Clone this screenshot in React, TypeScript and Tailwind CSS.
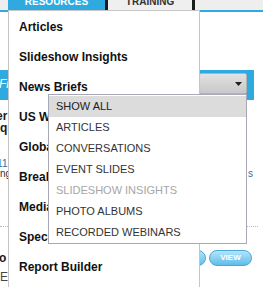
const menuItems = [
  'Articles',
  'Slideshow Insights',
  'News Briefs',
  'US Weekly Briefs',
  'Global Insights',
  'Breaking News',
  'Media Kits',
  'Special Reports',
  'Report Builder',
]

const options = [
  { label: 'Show All', active: true },
  { label: 'Articles' },
  { label: 'Conversations' },
  { label: 'Event Slides' },
  { label: 'Slideshow Insights', disabled: true },
  { label: 'Photo Albums' },
  { label: 'Recorded Webinars' },
]

export default function App() {
  return (
    <div className="relative h-[287px] w-[263px] overflow-hidden bg-white font-['Liberation_Sans',Arial,sans-serif]">
      {/* tabs */}
      <div className="flex h-[10px] bg-[#eeeeee] pl-[8px]">
        <div className="w-[97px] overflow-hidden bg-[#2eaae1] text-center text-[10px] font-bold leading-[10px] text-white">
          <div className="-mt-[3px]">RESOURCES</div>
        </div>
        <div className="w-[3px] bg-[#1c1c1c]" />
        <div className="w-[84px] overflow-hidden bg-[#efefef] text-center text-[10px] font-bold leading-[10px] text-[#333]">
          <div className="-mt-[3px]">TRAINING</div>
        </div>
        <div className="w-[3px] bg-[#1c1c1c]" />
      </div>
      <div className="h-[2px] bg-[#2eaae1]" />

      {/* filter band */}
      <div className="mt-[58px] flex h-[30px] w-[254px] bg-[#2eaae1]">
        <div className="w-[199px] overflow-hidden whitespace-nowrap pt-[7px] text-[12px] italic leading-[14px] text-white">
          <span className="-ml-[1px] inline-block">Filter by</span>
        </div>
        <div className="mt-[3px] flex h-[21px] w-[48px] items-center justify-end rounded-[2px] border border-[#b3b3b3] bg-gradient-to-b from-[#e2e2e2] to-[#c8c8c8] pr-[4px]">
          <svg width="7" height="4" viewBox="0 0 7 4">
            <path d="M0 0h7L3.5 4z" fill="#1e1e1e" />
          </svg>
        </div>
      </div>

      {/* page content peeking out */}
      <div className="whitespace-nowrap pt-[10px]">
        <p className="-ml-[4px] text-[12px] font-bold leading-[12px] text-[#1a1a1a]">er Report</p>
        <p className="text-[12px] font-bold leading-[12px] text-[#1a1a1a]">quarterly</p>
        <p className="mt-[25px] -ml-[14px] text-[10px] leading-[10px] text-[#2b6fa8]">2011 May</p>
        <div className="flex w-[253px] justify-between text-[10px] leading-[10px] text-[#333]">
          <span>ng</span>
          <span className="text-[#2b6fa8]">s</span>
        </div>
      </div>
      <div className="mt-[47px] w-[258px] border-t border-dotted border-[#b8b8b8]" />
      <div className="flex justify-between pr-[11px]">
        <div className="whitespace-nowrap pt-[24px]">
          <p className="-ml-[1px] text-[12px] font-bold leading-[14px] text-[#1a1a1a]">o</p>
          <p className="mt-[5px] text-[12px] leading-[14px] text-[#444]">E</p>
        </div>
        <div className="mt-[23px] flex h-[16px] gap-[3px]">
          <div className="w-[40px] rounded-full border border-[#4aa8da] bg-gradient-to-b from-[#b4e4f9] to-[#5cbde9]" />
          <div className="flex w-[43px] items-center justify-center rounded-full border border-[#4aa8da] bg-gradient-to-b from-[#b4e4f9] to-[#5cbde9] text-[8px] font-bold text-white">
            VIEW
          </div>
        </div>
      </div>

      {/* resources menu */}
      <div className="absolute bottom-0 left-[8px] top-[10px] w-[192px] border-x border-t border-[#c6c6c6] bg-white pt-[1px]">
        {menuItems.map((item) => (
          <div
            key={item}
            className="flex h-[30px] items-center whitespace-nowrap pl-[10px] text-[12px] font-bold text-[#111]"
          >
            {item}
          </div>
        ))}
      </div>

      {/* open select list */}
      <div className="absolute left-[48px] top-[94px] w-[199px] border border-[#a8a8b8] bg-white pt-[1px]">
        {options.map(({ label, active, disabled }) => (
          <div
            key={label}
            className={
              'h-[21px] pl-[7px] text-[11px] uppercase leading-[21px] ' +
              (active ? 'bg-[#dcdcdc] text-[#222]' : disabled ? 'text-[#a6a6a6]' : 'text-[#333]')
            }
          >
            {label}
          </div>
        ))}
      </div>
    </div>
  )
}
